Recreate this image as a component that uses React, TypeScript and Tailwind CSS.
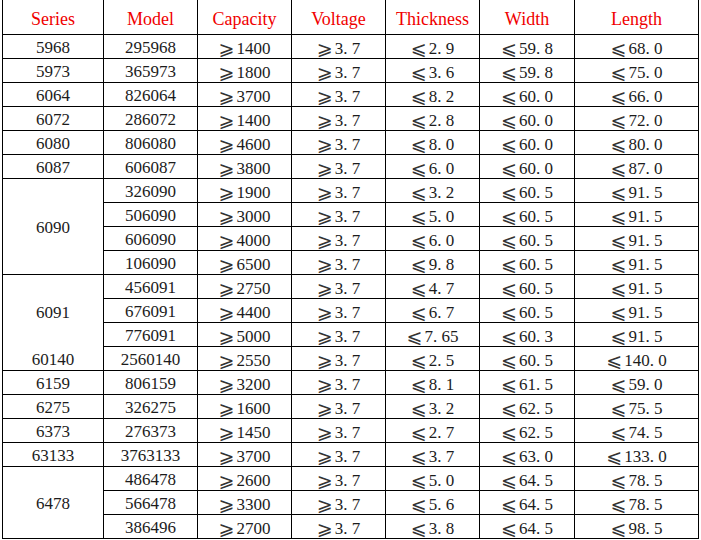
import React from "react";

type Row = [string | null, string, string, string, string, string, string, number?];

const rows: Row[] = [
  ["5968", "295968", "1400", "3.7", "2.9", "59.8", "68.0"],
  ["5973", "365973", "1800", "3.7", "3.6", "59.8", "75.0"],
  ["6064", "826064", "3700", "3.7", "8.2", "60.0", "66.0"],
  ["6072", "286072", "1400", "3.7", "2.8", "60.0", "72.0"],
  ["6080", "806080", "4600", "3.7", "8.0", "60.0", "80.0"],
  ["6087", "606087", "3800", "3.7", "6.0", "60.0", "87.0"],
  ["6090", "326090", "1900", "3.7", "3.2", "60.5", "91.5", 4],
  [null, "506090", "3000", "3.7", "5.0", "60.5", "91.5"],
  [null, "606090", "4000", "3.7", "6.0", "60.5", "91.5"],
  [null, "106090", "6500", "3.7", "9.8", "60.5", "91.5"],
  ["6091|60140", "456091", "2750", "3.7", "4.7", "60.5", "91.5", 4],
  [null, "676091", "4400", "3.7", "6.7", "60.5", "91.5"],
  [null, "776091", "5000", "3.7", "7.65", "60.3", "91.5"],
  [null, "2560140", "2550", "3.7", "2.5", "60.5", "140.0"],
  ["6159", "806159", "3200", "3.7", "8.1", "61.5", "59.0"],
  ["6275", "326275", "1600", "3.7", "3.2", "62.5", "75.5"],
  ["6373", "276373", "1450", "3.7", "2.7", "62.5", "74.5"],
  ["63133", "3763133", "3700", "3.7", "3.7", "63.0", "133.0"],
  ["6478", "486478", "2600", "3.7", "5.0", "64.5", "78.5", 3],
  [null, "566478", "3300", "3.7", "5.6", "64.5", "78.5"],
  [null, "386496", "2700", "3.7", "3.8", "64.5", "98.5"],
];

const headers = ["Series", "Model", "Capacity", "Voltage", "Thickness", "Width", "Length"];

const cell =
  "border-r border-b border-black flex items-center justify-center text-[17px] text-[#1c1c1c] [font-family:'Liberation_Serif',serif] leading-none";

function Num({ v }: { v: string }) {
  const parts = v.split(".");
  if (parts.length === 1) return <>{v}</>;
  return (
    <>
      {parts[0]}.<span className="inline-block w-[0.25em]" />
      {parts[1]}
    </>
  );
}

function Sym({ s, v }: { s: string; v: string }) {
  return (
    <span className="inline-flex items-baseline">
      <span className="inline-block w-[18px] text-left text-[19px] text-[#333] [font-family:'DejaVu_Sans',sans-serif] translate-y-[1px]">
        {s}
      </span>
      <Num v={v} />
    </span>
  );
}

export default function App() {
  return (
    <div className="w-[701px] h-[540px] bg-white overflow-hidden">
      <div className="ml-[2px] w-fit border-l border-black grid grid-cols-[101px_94px_94px_94px_94px_95px_124px] grid-rows-[35px_repeat(21,24px)]">
        {headers.map((h) => (
          <div
            key={h}
            className="border-r border-b border-black flex items-center justify-center text-[18px] text-[#f00000] [font-family:'Liberation_Serif',serif] leading-none pt-[3px]"
          >
            {h}
          </div>
        ))}
        {rows.map((r, i) => (
          <React.Fragment key={i}>
            {r[0] !== null &&
              (r[0] === "6091|60140" ? (
                <div className="row-span-4 border-r border-b border-black flex flex-col text-[17px] text-[#1c1c1c] [font-family:'Liberation_Serif',serif] leading-none">
                  <div className="h-[72px] flex items-center justify-center pt-[2px]">6091</div>
                  <div className="h-[23px] flex items-center justify-center pt-[2px]">60140</div>
                </div>
              ) : (
                <div
                  className={`${cell} pt-[2px] ${r[7] === 4 ? "row-span-4" : r[7] === 3 ? "row-span-3" : ""}`}
                >
                  {r[0]}
                </div>
              ))}
            <div className={`${cell} pt-[2px]`}>{r[1]}</div>
            <div className={`${cell} pt-[2px]`}>
              <Sym s="⩾" v={r[2]} />
            </div>
            <div className={`${cell} pt-[2px]`}>
              <Sym s="⩾" v={r[3]} />
            </div>
            <div className={`${cell} pt-[2px]`}>
              <Sym s="⩽" v={r[4]} />
            </div>
            <div className={`${cell} pt-[2px]`}>
              <Sym s="⩽" v={r[5]} />
            </div>
            <div className={`${cell} pt-[2px]`}>
              <Sym s="⩽" v={r[6]} />
            </div>
          </React.Fragment>
        ))}
      </div>
    </div>
  );
}
